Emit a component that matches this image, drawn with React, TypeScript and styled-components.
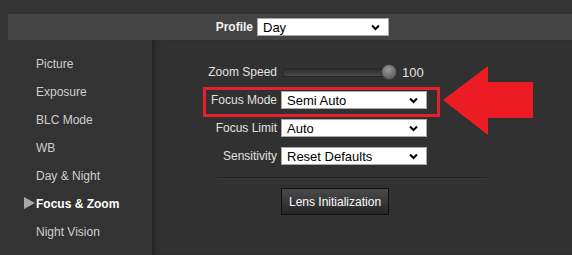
import styled, { createGlobalStyle } from "styled-components";

const GlobalStyle = createGlobalStyle`
  html, body {
    margin: 0;
    padding: 0;
    background: #333333;
    font-family: Arial, "Liberation Sans", sans-serif;
  }
`;

// Layout
const Page = styled.div`
  padding-top: 14px;
  height: 241px;
  overflow: hidden;
`;

const TopBar = styled.div`
  margin-left: 8px;
  height: 26px;
  background: #444444;
  display: grid;
  grid-template-columns: 245px auto;
  column-gap: 4px;
  align-items: center;
`;

const BarLabel = styled.span`
  text-align: right;
  color: #f2f2f2;
  font-size: 12px;
  font-weight: bold;
`;

const Body = styled.div`
  display: flex;
  height: 215px;
`;

const Sidebar = styled.ul`
  list-style: none;
  margin: 0;
  padding: 10px 0 0;
  width: 152px;
  flex-shrink: 0;
  background: #333333;
`;

const NavItem = styled.li<{ $active?: boolean }>`
  position: relative;
  height: 28px;
  line-height: 28px;
  padding-left: 36px;
  font-size: 12px;
  color: ${(p) => (p.$active ? "#ffffff" : "#cfcfcf")};
  font-weight: ${(p) => (p.$active ? "bold" : "normal")};
`;

const Pointer = styled.span`
  position: absolute;
  left: 24px;
  top: 7px;
  width: 0;
  height: 0;
  border-top: 6px solid transparent;
  border-bottom: 6px solid transparent;
  border-left: 11px solid #a9a9a9;
`;

const Main = styled.div`
  position: relative;
  flex: 1;
  padding-top: 18px;
  background: #313131;
  box-shadow: inset 6px 0 6px -4px rgba(0, 0, 0, 0.35);
`;

const Row = styled.div<{ $highlight?: boolean }>`
  position: relative;
  height: 28px;
  display: grid;
  grid-template-columns: 125px auto;
  column-gap: 4px;
  align-items: center;

  ${(p) =>
    p.$highlight &&
    `
    &::after {
      content: "";
      position: absolute;
      left: 51px;
      top: 1px;
      width: 231px;
      height: 24px;
      border: 3px solid #e3202b;
    }
  `}
`;

const Label = styled.span`
  text-align: right;
  color: #e2e2e2;
  font-size: 12px;
`;

const Select = styled.div<{ $width: number }>`
  box-sizing: border-box;
  width: ${(p) => p.$width}px;
  height: 18px;
  background: #ffffff;
  border: 1px solid #a8a8a8;
  display: flex;
  align-items: center;
  justify-content: space-between;
  padding: 0 8px 0 5px;
  font-size: 13px;
  color: #000000;
`;

const Chevron = () => (
  <svg width="9" height="7" viewBox="0 0 9 7">
    <path d="M1 1.5 L4.5 5 L8 1.5" fill="none" stroke="#000" strokeWidth="2" />
  </svg>
);

const SliderWrap = styled.div`
  display: flex;
  align-items: center;
  gap: 12px;
  color: #e2e2e2;
  font-size: 13px;
`;

const Track = styled.div`
  position: relative;
  box-sizing: border-box;
  width: 108px;
  height: 9px;
  margin-left: 1px;
  border-radius: 5px;
  border: 1px solid #262626;
  background: linear-gradient(#2b2b2b, #4a4a4a);
`;

const Thumb = styled.div`
  position: absolute;
  right: -8px;
  top: -5px;
  box-sizing: border-box;
  width: 16px;
  height: 16px;
  border-radius: 50%;
  border: 1px solid #3a3a3a;
  background: radial-gradient(circle at 45% 35%, #9a9a9a, #626262 70%);
`;

const Divider = styled.div`
  margin: 7px 0 9px 65px;
  width: 270px;
  height: 1px;
  background: #1f1f1f;
  border-bottom: 1px solid #3a3a3a;
`;

const ActionRow = styled.div`
  padding-left: 129px;
`;

const Button = styled.button`
  height: 27px;
  padding: 0 7px;
  background: linear-gradient(#4a4a4a, #262626);
  border: 1px solid #111111;
  color: #ffffff;
  font-family: Arial, "Liberation Sans", sans-serif;
  font-size: 12px;
`;

const Arrow = styled.svg`
  position: absolute;
  left: 291px;
  top: 26px;
`;

const navItems = [
  "Picture",
  "Exposure",
  "BLC Mode",
  "WB",
  "Day & Night",
  "Focus & Zoom",
  "Night Vision",
];

export default function App() {
  return (
    <>
      <GlobalStyle />
      <Page>
        <TopBar>
          <BarLabel>Profile</BarLabel>
          <Select $width={132}>
            Day
            <Chevron />
          </Select>
        </TopBar>
        <Body>
          <Sidebar>
            {navItems.map((item) => (
              <NavItem key={item} $active={item === "Focus & Zoom"}>
                {item === "Focus & Zoom" && <Pointer />}
                {item}
              </NavItem>
            ))}
          </Sidebar>
          <Main>
            <Row>
              <Label>Zoom Speed</Label>
              <SliderWrap>
                <Track>
                  <Thumb />
                </Track>
                <span>100</span>
              </SliderWrap>
            </Row>
            <Row $highlight>
              <Label>Focus Mode</Label>
              <Select $width={146}>
                Semi Auto
                <Chevron />
              </Select>
            </Row>
            <Row>
              <Label>Focus Limit</Label>
              <Select $width={146}>
                Auto
                <Chevron />
              </Select>
            </Row>
            <Row>
              <Label>Sensitivity</Label>
              <Select $width={146}>
                Reset Defaults
                <Chevron />
              </Select>
            </Row>
            <Divider />
            <ActionRow>
              <Button>Lens Initialization</Button>
            </ActionRow>
            <Arrow width="90" height="70" viewBox="0 0 90 70">
              <polygon
                points="0,34 45,0 45,16 90,16 90,52 45,52 45,69"
                fill="#ed1c24"
              />
            </Arrow>
          </Main>
        </Body>
      </Page>
    </>
  );
}
